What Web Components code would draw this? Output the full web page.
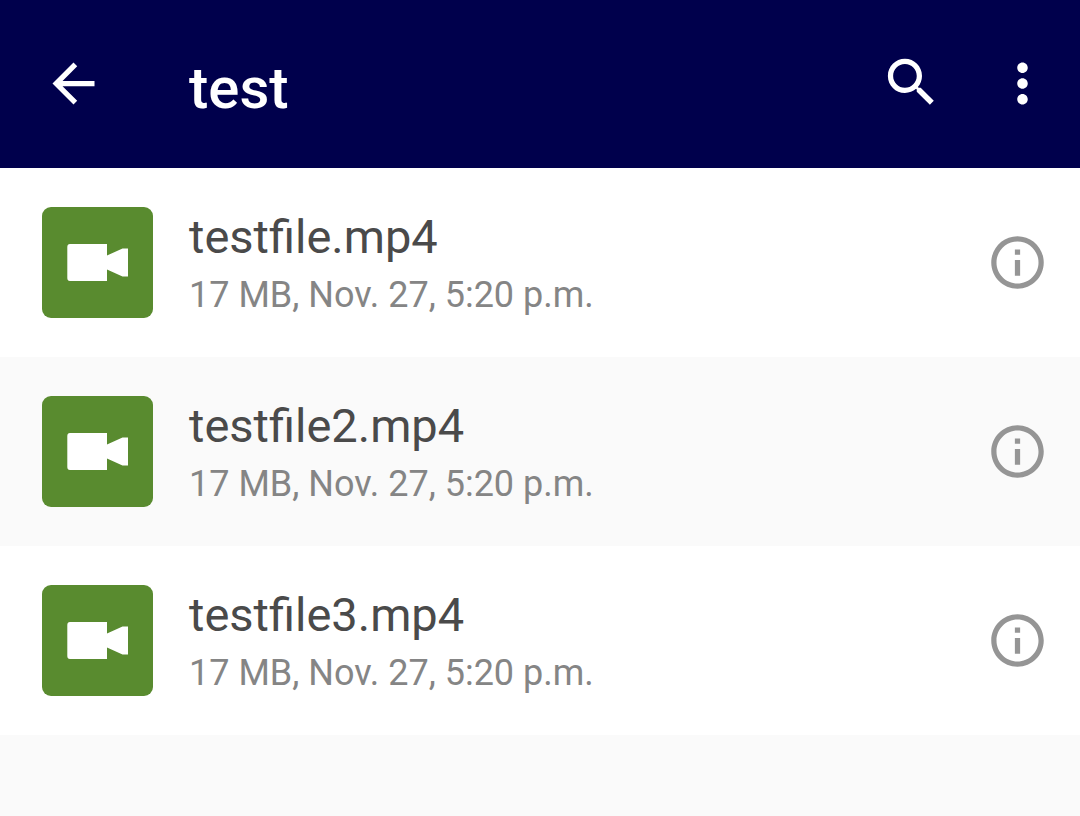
<!DOCTYPE html>
<html lang="en">
<head>
<meta charset="utf-8">
<meta name="viewport" content="width=device-width, initial-scale=1">
<title>test</title>
<style>
  html { background: #fafafa; }
  body { margin: 0; font-family: Roboto, "Liberation Sans", sans-serif; }
</style>
</head>
<body>
<file-browser></file-browser>

<template id="icon-button-template">
  <style>
    :host { display: block; flex: none; }
    button { display: block; margin: 0; padding: 0; border: 0; background: none; color: inherit; cursor: pointer; }
    ::slotted(svg) { display: block; width: 63px; height: 63px; fill: currentColor; }
  </style>
  <button type="button"><slot></slot></button>
</template>

<template id="app-bar-template">
  <style>
    :host { display: block; background: #00004c; color: #fff; }
    header { display: flex; align-items: center; height: 168px; padding: 0 26px 2px 42px; box-sizing: border-box; }
    h1 { flex: 1; margin: 0; padding: 10px 0 0 84px; font-size: 58px; line-height: 64px; font-weight: 500; }
    .actions { display: flex; gap: 48px; }
  </style>
  <header>
    <icon-button label="Back"><svg viewBox="0 0 24 24" aria-hidden="true"><path d="M20 11H7.830l5.590-5.590L12 4l-8 8 8 8 1.410-1.410L7.830 13H20v-2z"/></svg></icon-button>
    <h1><slot></slot></h1>
    <div class="actions">
      <icon-button label="Search"><svg viewBox="0 0.400 24 24" aria-hidden="true"><path d="M15.5 14h-.79l-.28-.27C15.41 12.59 16 11.11 16 9.5 16 5.91 13.09 3 9.5 3S3 5.91 3 9.5 5.91 16 9.5 16c1.61 0 3.09-.59 4.23-1.57l.27.28v.79l5 4.99L20.49 19l-4.99-5zm-6 0C7.01 14 5 11.99 5 9.5S7.01 5 9.5 5 14 7.01 14 9.5 11.99 14 9.5 14z"/></svg></icon-button>
      <icon-button label="More options"><svg viewBox="0 0 24 24" aria-hidden="true"><path d="M12 8c1.1 0 2-.9 2-2s-.9-2-2-2-2 .9-2 2 .9 2 2 2zm0 2c-1.1 0-2 .9-2 2s.9 2 2 2 2-.9 2-2-.9-2-2-2zm0 6c-1.1 0-2 .9-2 2s.9 2 2 2 2-.9 2-2-.9-2-2-2z"/></svg></icon-button>
    </div>
  </header>
</template>

<template id="file-row-template">
  <style>
    :host { display: flex; align-items: center; height: 189px; padding: 0 31px 0 42px; box-sizing: border-box; background: #fff; }
    .tile { flex: none; display: block; width: 111px; height: 111px; border-radius: 9px; background: #598b2f; }
    .text { flex: 1; min-width: 0; padding: 6px 0 0 36px; }
    .name { font-size: 47px; line-height: 58px; color: #4a4a4a; }
    .meta { font-size: 36px; line-height: 58px; color: #858585; }
    icon-button { color: #959595; }
  </style>
  <svg class="tile" viewBox="0 0 111 111" aria-hidden="true"><path fill="#fff" d="M28 37H65V48.5L80.5 41.5H86V69.5H80.5L65 62.5V74H28Q25.3 74 25.3 71V40Q25.3 37 28 37Z"/></svg>
  <div class="text">
    <div class="name"><slot></slot></div>
    <div class="meta"><slot name="meta"></slot></div>
  </div>
  <icon-button label="File info"><svg viewBox="0 0 24 24" aria-hidden="true"><path d="M11 17h2v-6h-2v6zm1-15C6.48 2 2 6.48 2 12s4.48 10 10 10 10-4.48 10-10S17.52 2 12 2zm0 18c-4.41 0-8-3.59-8-8s3.59-8 8-8 8 3.59 8 8-3.59 8-8 8zM11 9h2V7h-2v2z"/></svg></icon-button>
</template>

<template id="file-browser-template">
  <style>
    :host { display: block; }
    main { display: flex; flex-direction: column; }
    file-row:nth-child(even) { background: #fafafa; }
  </style>
  <app-bar>test</app-bar>
  <main>
    <file-row>testfile.mp4<span slot="meta">17 MB, Nov. 27, 5:20 p.m.</span></file-row>
    <file-row>testfile2.mp4<span slot="meta">17 MB, Nov. 27, 5:20 p.m.</span></file-row>
    <file-row>testfile3.mp4<span slot="meta">17 MB, Nov. 27, 5:20 p.m.</span></file-row>
  </main>
</template>

<script>
  class TemplateElement extends HTMLElement {
    connectedCallback() {
      if (this.shadowRoot) return;
      const template = document.getElementById(this.localName + '-template');
      this.attachShadow({ mode: 'open' }).append(document.importNode(template.content, true));
    }
  }
  class IconButton extends TemplateElement {
    connectedCallback() {
      super.connectedCallback();
      this.shadowRoot.querySelector('button').setAttribute('aria-label', this.getAttribute('label'));
    }
  }
  customElements.define('icon-button', IconButton);
  customElements.define('app-bar', class AppBar extends TemplateElement {});
  customElements.define('file-row', class FileRow extends TemplateElement {});
  customElements.define('file-browser', class FileBrowser extends TemplateElement {});
</script>
</body>
</html>
